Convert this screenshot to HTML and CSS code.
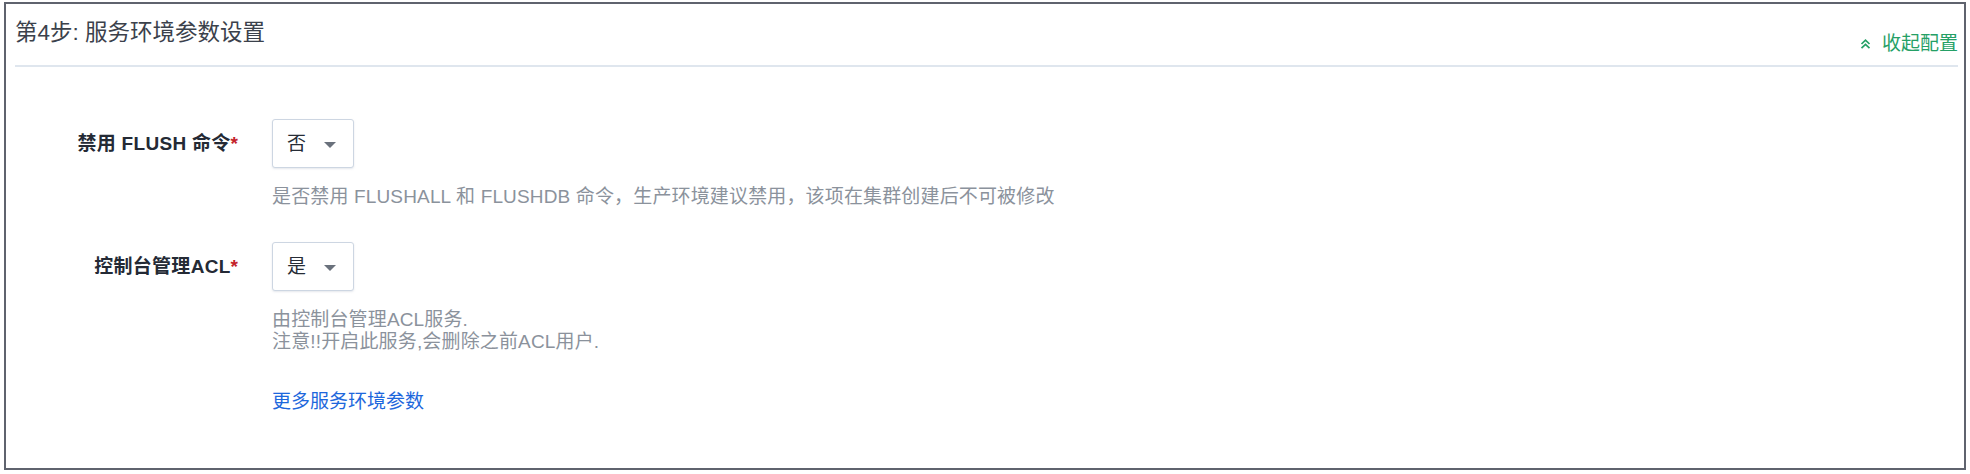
FILE: index.html
```html
<!DOCTYPE html>
<html lang="zh-CN">
<head>
<meta charset="utf-8">
<title>服务环境参数设置</title>
<link rel="stylesheet" href="styles.css">
</head>
<body>
<section class="panel">
  <header class="panel-head">
    <h2 class="panel-title">第4步: 服务环境参数设置</h2>
    <a class="collapse" href="#">
      <svg class="collapse-icon" width="11" height="10" viewBox="0 0 11 10" aria-hidden="true">
        <polyline points="1.5,5 5.5,1.2 9.5,5" fill="none" stroke="currentColor" stroke-width="1.7"/>
        <polyline points="1.5,9.2 5.5,5.4 9.5,9.2" fill="none" stroke="currentColor" stroke-width="1.7"/>
      </svg>
      <span>收起配置</span>
    </a>
  </header>
  <div class="form">
    <div class="field">
      <div class="field-label">禁用 FLUSH 命令<span class="req">*</span></div>
      <div class="select"><span class="select-value">否</span><span class="caret"></span></div>
      <div class="field-help">是否禁用 FLUSHALL 和 FLUSHDB 命令，生产环境建议禁用，该项在集群创建后不可被修改</div>
    </div>
    <div class="field field-second">
      <div class="field-label">控制台管理ACL<span class="req">*</span></div>
      <div class="select"><span class="select-value">是</span><span class="caret"></span></div>
      <div class="field-help">由控制台管理ACL服务.<br>注意!!开启此服务,会删除之前ACL用户.</div>
    </div>
    <div class="more-row">
      <a class="more-link" href="#">更多服务环境参数</a>
    </div>
  </div>
</section>
</body>
</html>
```

FILE: styles.css
```css
html, body {
  margin: 0;
  padding: 0;
  background: #ffffff;
}

body {
  font-family: "Liberation Sans", "Noto Sans CJK SC", sans-serif;
  color: #2a303b;
}

.panel {
  box-sizing: border-box;
  margin: 2px 4px 0 4px;
  height: 468px;
  border: 2px solid #5f636e;
  background: #fff;
  overflow: hidden;
}

.panel-head {
  display: flex;
  justify-content: space-between;
  align-items: flex-start;
  height: 47px;
  margin: 0 6px 0 9px;
  padding: 14px 0 0;
  border-bottom: 2px solid #dfe6ee;
}

.panel-title {
  margin: 0;
  font-size: 22.5px;
  line-height: 30px;
  font-weight: normal;
  color: #3b414b;
}

.collapse {
  display: flex;
  align-items: center;
  gap: 11px;
  height: 24px;
  margin-top: 14px;
  font-size: 19px;
  line-height: 24px;
  color: #25a066;
  text-decoration: none;
}

.collapse-icon {
  display: block;
}

.form {
  padding-top: 52px;
}

.field {
  display: grid;
  grid-template-columns: 232px auto 1fr;
  column-gap: 34px;
}

.field-second {
  margin-top: 34px;
}

.field-label {
  grid-column: 1;
  grid-row: 1;
  text-align: right;
  font-size: 19px;
  letter-spacing: 0.3px;
  line-height: 49px;
  height: 49px;
  font-weight: bold;
  color: #242a35;
}

.req {
  color: #c4232b;
  letter-spacing: 0;
}

.select {
  grid-column: 2;
  grid-row: 1;
  box-sizing: border-box;
  width: 82px;
  height: 49px;
  display: flex;
  align-items: center;
  justify-content: space-between;
  padding: 0 17px 0 14px;
  border: 1px solid #cdd6e2;
  border-radius: 3px;
  box-shadow: 0 1px 2px rgba(150, 165, 185, 0.25);
  background: #fff;
}

.select-value {
  font-size: 19px;
  line-height: 24px;
  color: #262c36;
}

.caret {
  width: 0;
  height: 0;
  border-left: 6px solid transparent;
  border-right: 6px solid transparent;
  border-top: 6px solid #6a717c;
  margin-top: 2px;
}

.field-help {
  grid-column: 2 / 4;
  grid-row: 2;
  margin-top: 18px;
  font-size: 19px;
  letter-spacing: 0.15px;
  line-height: 22px;
  color: #8b929c;
}

.more-row {
  margin: 38px 0 0 266px;
}

.more-link {
  display: inline-block;
  font-size: 19px;
  line-height: 22px;
  color: #1d67dc;
  text-decoration: none;
}
```
